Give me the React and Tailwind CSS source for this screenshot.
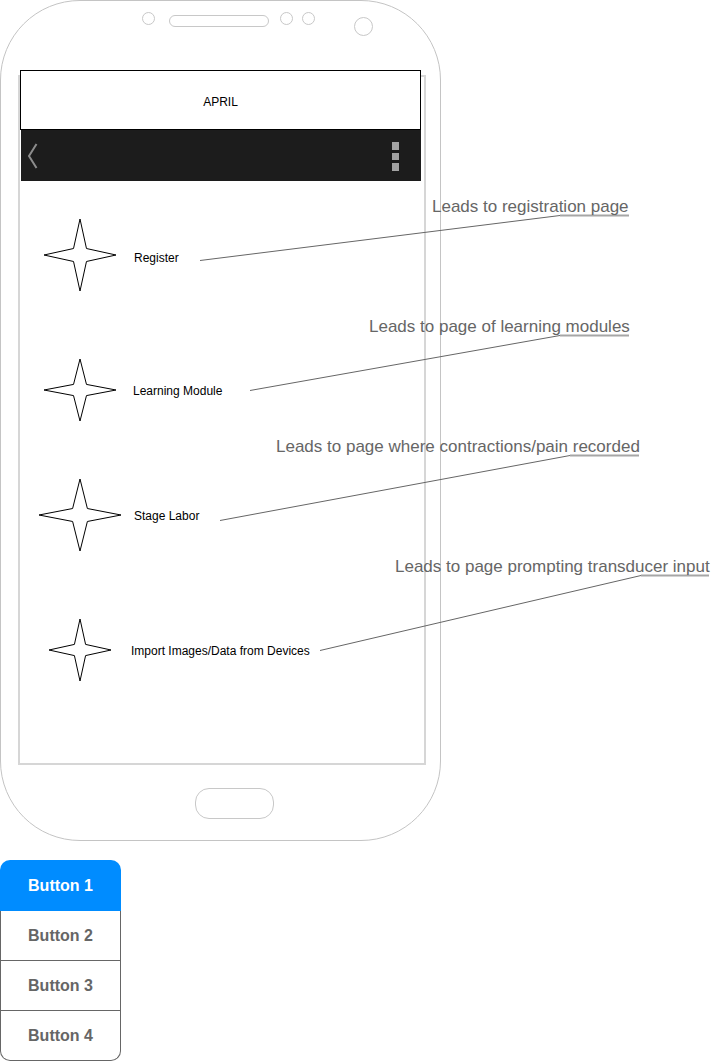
import React from 'react';

const menuItems = [
    { label: 'Register', w: 72, h: 72, rowMt: 'mt-[38px]', labelCls: 'ml-[13px] pt-[5px]' },
    { label: 'Learning Module', w: 72, h: 62, rowMt: 'mt-[63px]', labelCls: 'ml-[12px] pt-[2px]' },
    { label: 'Stage Labor', w: 82, h: 72, rowMt: 'mt-[53px]', labelCls: 'ml-[13px] pt-[2px]' },
    { label: 'Import Images/Data from Devices', w: 62, h: 62, rowMt: 'mt-[63px]', labelCls: 'ml-[10px] pt-[2px]' },
];

// annotation arrows: from label end to the underline start
const callouts = [
    { text: 'Leads to registration page', pos: 'left-[432px] top-[198px]', from: [200, 260.5], to: [560, 215.5], end: 629 },
    { text: 'Leads to page of learning modules', pos: 'left-[369px] top-[318px]', from: [250, 390.5], to: [560, 335.5], end: 629 },
    { text: 'Leads to page where contractions/pain recorded', pos: 'left-[276px] top-[438px]', from: [220, 520.5], to: [570, 455.5], end: 639 },
    { text: 'Leads to page prompting transducer input', pos: 'left-[395px] top-[558px]', from: [320, 650.5], to: [641, 575.5], end: 709 },
];

function Star({ w, h }) {
    const cx = w / 2;
    const cy = h / 2;
    const iw = cx * 0.18;
    const ih = cy * 0.18;
    const pts = [
        [cx, 0], [cx + iw, cy - ih], [w, cy], [cx + iw, cy + ih],
        [cx, h], [cx - iw, cy + ih], [0, cy], [cx - iw, cy - ih],
    ].map(p => p.join(',')).join(' ');
    return (
        <svg width={w} height={h} viewBox={`0 0 ${w} ${h}`} className="overflow-visible">
            <polygon points={pts} fill="white" stroke="black" strokeWidth="1" strokeLinejoin="miter" />
        </svg>
    );
}

export default function App() {
    return (
        <div className="relative w-[711px] h-[1061px] bg-white overflow-hidden font-['Liberation_Sans',Arial,sans-serif]">
            {/* Phone */}
            <div className="w-[441px] h-[841px] border border-[#c4c4c4] rounded-[80px]">
                {/* Earpiece, sensors, camera */}
                <div className="flex items-start ml-[141px]">
                    <div className="mt-[11px] w-[13px] h-[13px] rounded-full border border-[#c8c8c8]" />
                    <div className="mt-[14px] ml-[14px] w-[100px] h-[12px] rounded-full border border-[#c8c8c8]" />
                    <div className="mt-[11px] ml-[11px] w-[13px] h-[13px] rounded-full border border-[#c8c8c8]" />
                    <div className="mt-[11px] ml-[9px] w-[13px] h-[13px] rounded-full border border-[#c8c8c8]" />
                    <div className="mt-[16px] ml-[39px] w-[19px] h-[19px] rounded-full border border-[#c8c8c8]" />
                </div>

                {/* Screen */}
                <div className="mt-[39px] ml-[17px] w-[408px] h-[690px] border-2 border-[#d6d6d6]">
                    <div className="-mt-[7px] w-[401px] h-[60px] border border-black bg-white flex items-center justify-center pt-[3px] text-[12px] text-black">
                        APRIL
                    </div>
                    <div className="ml-[1px] w-[400px] h-[51px] bg-[#1c1c1c] flex items-center justify-between pl-[6px] pr-[22px]">
                        <svg width="11" height="26" viewBox="0 0 11 26">
                            <polyline points="9.5,1 2,13 9.5,25" fill="none" stroke="#8c8c8c" strokeWidth="2" />
                        </svg>
                        <div className="flex flex-col gap-[3px] mt-[1px]">
                            <div className="w-[7px] h-[8px] bg-[#a3a3a3]" />
                            <div className="w-[7px] h-[7px] bg-[#a3a3a3]" />
                            <div className="w-[7px] h-[8px] bg-[#a3a3a3]" />
                        </div>
                    </div>

                    <div className="flex flex-col pl-[19px]">
                        {menuItems.map(item => (
                            <div key={item.label} className={`flex items-center h-[72px] ${item.rowMt}`}>
                                <div className="w-[82px] h-[72px] flex items-center justify-center">
                                    <Star w={item.w} h={item.h} />
                                </div>
                                <span className={`text-[12px] text-black ${item.labelCls}`}>{item.label}</span>
                            </div>
                        ))}
                    </div>
                </div>

                {/* Home button */}
                <div className="mt-[23px] ml-[194px] w-[79px] h-[31px] rounded-[14px] border border-[#c8c8c8]" />
            </div>

            {/* Button group */}
            <div className="mt-[19px] w-[121px] flex flex-col text-[16px] font-bold">
                <div className="h-[51px] bg-[#008cff] text-white rounded-t-[10px] flex items-center justify-center">Button 1</div>
                <div className="h-[50px] border-x border-b border-[#666] text-[#666] flex items-center justify-center">Button 2</div>
                <div className="h-[50px] border-x border-b border-[#666] text-[#666] flex items-center justify-center">Button 3</div>
                <div className="h-[50px] border-x border-b border-[#666] text-[#666] rounded-b-[10px] flex items-center justify-center">Button 4</div>
            </div>

            {/* Annotations */}
            <svg className="absolute left-0 top-0 pointer-events-none" width="711" height="1061">
                {callouts.map(c => (
                    <g key={c.text}>
                        <line x1={c.from[0]} y1={c.from[1]} x2={c.to[0]} y2={c.to[1]} stroke="#666" strokeWidth="1" />
                        <line x1={c.to[0]} y1={c.to[1]} x2={c.end} y2={c.to[1]} stroke="#a6a6a6" strokeWidth="2" />
                    </g>
                ))}
            </svg>
            {callouts.map(c => (
                <div key={c.text} className={`absolute ${c.pos} whitespace-nowrap text-[17px] leading-[18px] text-[#666]`}>
                    {c.text}
                </div>
            ))}
        </div>
    );
}
